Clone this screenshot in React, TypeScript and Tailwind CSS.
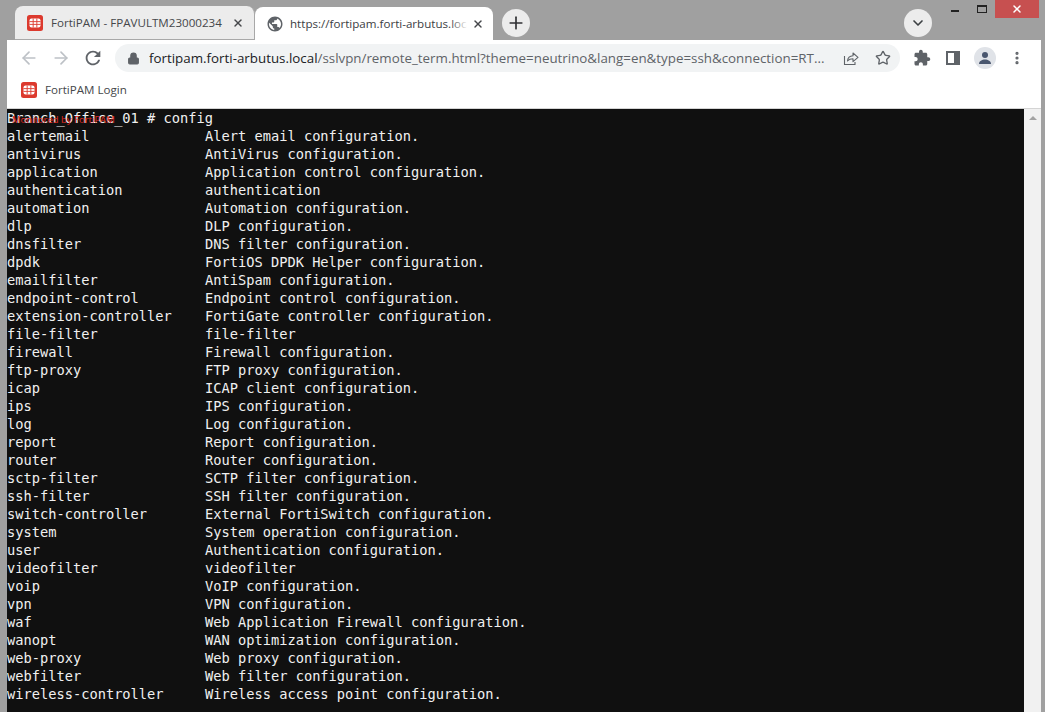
import React from "react";
import { ArrowLeft, ArrowRight, Lock, Star, Plus, X, ChevronDown, EllipsisVertical } from "lucide-react";

const rows: [string, string][] = [
  ["alertemail", "Alert email configuration."],
  ["antivirus", "AntiVirus configuration."],
  ["application", "Application control configuration."],
  ["authentication", "authentication"],
  ["automation", "Automation configuration."],
  ["dlp", "DLP configuration."],
  ["dnsfilter", "DNS filter configuration."],
  ["dpdk", "FortiOS DPDK Helper configuration."],
  ["emailfilter", "AntiSpam configuration."],
  ["endpoint-control", "Endpoint control configuration."],
  ["extension-controller", "FortiGate controller configuration."],
  ["file-filter", "file-filter"],
  ["firewall", "Firewall configuration."],
  ["ftp-proxy", "FTP proxy configuration."],
  ["icap", "ICAP client configuration."],
  ["ips", "IPS configuration."],
  ["log", "Log configuration."],
  ["report", "Report configuration."],
  ["router", "Router configuration."],
  ["sctp-filter", "SCTP filter configuration."],
  ["ssh-filter", "SSH filter configuration."],
  ["switch-controller", "External FortiSwitch configuration."],
  ["system", "System operation configuration."],
  ["user", "Authentication configuration."],
  ["videofilter", "videofilter"],
  ["voip", "VoIP configuration."],
  ["vpn", "VPN configuration."],
  ["waf", "Web Application Firewall configuration."],
  ["wanopt", "WAN optimization configuration."],
  ["web-proxy", "Web proxy configuration."],
  ["webfilter", "Web filter configuration."],
  ["wireless-controller", "Wireless access point configuration."],
];

function FortiLogo({ size }: { size: number }) {
  return (
    <svg width={size} height={size} viewBox="0 0 16 16" className="shrink-0">
      <rect width="16" height="16" rx="2.5" fill="#dc3a2e" />
      <rect x="2.5" y="3.5" width="11" height="9" rx="2" fill="#fff" />
      <g fill="#dc3a2e">
        <rect x="5.7" y="3.5" width="0.9" height="9" />
        <rect x="9.4" y="3.5" width="0.9" height="9" />
        <rect x="2.5" y="6.2" width="11" height="0.9" />
        <rect x="2.5" y="8.9" width="11" height="0.9" />
      </g>
    </svg>
  );
}

export default function App() {
  return (
    <div className="flex h-[712px] w-[1045px] flex-col overflow-hidden bg-[#a0a0a0] pr-1 pl-[7px] font-['Open_Sans',sans-serif]">
      {/* Tab strip */}
      <div className="relative flex h-[40px] shrink-0 items-end">
        <div className="ml-2 flex h-[34px] w-[240px] items-center rounded-t-lg border-r border-b border-[#a8a8a8] bg-[#ececec] pr-[10px] pl-3">
          <FortiLogo size={16} />
          <span className="ml-2 flex-1 text-[11.6px] whitespace-nowrap text-[#45474a]">FortiPAM - FPAVULTM23000234</span>
          <X size={12} strokeWidth={2.8} className="text-[#45474a]" />
        </div>
        <div className="relative flex h-[33px] w-[238px] items-center rounded-t-lg bg-white pr-[9px] pl-[11px]">
          <svg width="18" height="18" viewBox="0 0 24 24" fill="#5f6368" className="shrink-0">
            <path d="M12 2C6.48 2 2 6.48 2 12s4.48 10 10 10 10-4.48 10-10S17.52 2 12 2zm-1 17.93c-3.95-.49-7-3.85-7-7.93 0-.62.08-1.21.21-1.79L9 15v1c0 1.1.9 2 2 2v1.93zm6.9-2.54c-.26-.81-1-1.39-1.9-1.39h-1v-3c0-.55-.45-1-1-1H8v-2h2c.55 0 1-.45 1-1V7h2c1.1 0 2-.9 2-2v-.41c2.93 1.19 5 4.06 5 7.41 0 2.08-.8 3.97-2.1 5.39z" />
          </svg>
          <span className="ml-[6px] w-[177px] overflow-hidden text-[11.6px] whitespace-nowrap text-[#3c4043]">https://fortipam.forti-arbutus.local/sslvpn</span>
          <div className="absolute top-2 left-[195px] h-5 w-[18px] bg-gradient-to-r from-transparent to-white" />
          <X size={12} strokeWidth={2.8} className="ml-auto text-[#45474a]" />
        </div>
        <div className="mb-[3px] ml-[9px] flex h-7 w-7 items-center justify-center rounded-full bg-[#ececec]">
          <Plus size={20} strokeWidth={2} className="text-[#303134]" />
        </div>
        <div className="mr-[109px] mb-[3px] ml-auto flex h-7 w-7 items-center justify-center rounded-full bg-[#ececec]">
          <ChevronDown size={16} strokeWidth={2.5} className="text-[#3c4043]" />
        </div>
        <div className="absolute top-0 right-[2px] flex items-start">
          <div className="mt-[10px] mr-[18px] h-[2px] w-2 bg-[#222]" />
          <div className="mt-[5px] mr-2 h-2 w-[10px] border border-t-2 border-[#222]" />
          <div className="flex h-[18px] w-[44px] items-center justify-center bg-[#c75050]">
            <X size={12} strokeWidth={3} className="text-white" />
          </div>
        </div>
      </div>

      {/* Toolbar */}
      <div className="flex h-[32px] shrink-0 items-center bg-white pt-1">
        <ArrowLeft size={20} strokeWidth={2} className="ml-3 text-[#bdc1c6]" />
        <ArrowRight size={20} strokeWidth={2} className="ml-3 text-[#bdc1c6]" />
        <svg width="22" height="22" viewBox="0 0 24 24" fill="#5f6368" className="ml-[11px]">
          <path d="M17.65 6.35C16.2 4.9 14.21 4 12 4c-4.42 0-7.99 3.58-7.99 8s3.57 8 7.99 8c3.73 0 6.84-2.55 7.73-6h-2.08c-.82 2.33-3.04 4-5.65 4-3.31 0-6-2.69-6-6s2.69-6 6-6c1.66 0 3.14.69 4.22 1.78L13 11h7V4l-2.35 2.35z" />
        </svg>
        <div className="ml-[11px] flex h-7 w-[785px] items-center rounded-full bg-[#f1f3f4] pl-3">
          <Lock size={13} fill="#5f6368" className="shrink-0 text-[#5f6368]" />
          <span className="ml-[9px] w-[678px] shrink-0 overflow-hidden text-[13.35px] whitespace-nowrap text-[#5f6368]">
            <span className="text-[#202124]">fortipam.forti-arbutus.local</span>/sslvpn/remote_term.html?theme=neutrino&amp;lang=en&amp;type=ssh&amp;connection=RT...
          </span>
          <svg width="16" height="16" viewBox="0 0 16 16" fill="none" stroke="#5f6368" strokeWidth="1.1" className="ml-4 shrink-0">
            <path d="M1.5 6v8.500h10.500V12" />
            <path d="M4.500 11c.3-3.200 2.500-5 5.500-5.200V3l5 4.300-5 4.300V8.800C7.800 8.800 5.800 9.500 4.500 11z" strokeLinejoin="round" />
          </svg>
          <Star size={16} strokeWidth={2} className="ml-4 shrink-0 text-[#5f6368]" />
        </div>
        <svg width="18" height="18" viewBox="0 0 24 24" fill="#5f6368" className="ml-[13px]">
          <path d="M20.5 11H19V7c0-1.1-.9-2-2-2h-4V3.5C13 2.12 11.88 1 10.5 1S8 2.12 8 3.5V5H4c-1.1 0-1.99.9-1.99 2v3.8H3.5c1.49 0 2.7 1.21 2.7 2.7s-1.21 2.7-2.7 2.7H2V20c0 1.1.9 2 2 2h3.8v-1.5c0-1.49 1.21-2.7 2.7-2.7 1.49 0 2.7 1.21 2.7 2.7V22H17c1.1 0 2-.9 2-2v-4h1.5c1.38 0 2.5-1.12 2.5-2.5S21.88 11 20.500 11z" />
        </svg>
        <div className="ml-[15px] h-[14px] w-[14px] border-2 border-r-[6px] border-[#5f6368] bg-white" />
        <div className="ml-[14px] flex h-[22px] w-[22px] items-center justify-center rounded-full bg-[#e0e3e8]">
          <svg width="14" height="14" viewBox="0 0 14 14" fill="#49566e">
            <circle cx="7" cy="4" r="3" />
            <path d="M1 13c0-3 3-4.500 6-4.500S13 10 13 13z" />
          </svg>
        </div>
        <EllipsisVertical size={16} strokeWidth={2.8} className="ml-[13px] text-[#5f6368]" />
      </div>

      {/* Bookmarks */}
      <div className="flex h-[37px] shrink-0 items-center border-b border-[#d4d4d4] bg-white pl-[14px]">
        <FortiLogo size={16} />
        <span className="ml-2 text-[11.6px] text-[#45474a]">FortiPAM Login</span>
      </div>

      {/* Terminal page */}
      <div className="flex min-h-0 flex-1">
        <div className="relative flex-1 overflow-hidden bg-[#101010] font-['DejaVu_Sans_Mono',monospace] text-[13.7px] leading-[18px] whitespace-pre text-[#f0f0f0]">
          <div>Branch_Office_01 # config</div>
          <div className="absolute top-[2px] left-[5px] font-['Open_Sans',sans-serif] text-[9.5px] text-[#e0281f]">Monitored by FortiPAM</div>
          {rows.map(([name, desc]) => (
            <div key={name} className="grid grid-cols-[198px_1fr]">
              <span>{name}</span>
              <span>{desc}</span>
            </div>
          ))}
        </div>
        <div className="flex w-[17px] shrink-0 justify-center bg-[#f1f1f1] pt-[7px]">
          <div className="h-0 w-0 border-x-[4px] border-b-[4px] border-x-transparent border-b-[#a3a3a3]" />
        </div>
      </div>
    </div>
  );
}
